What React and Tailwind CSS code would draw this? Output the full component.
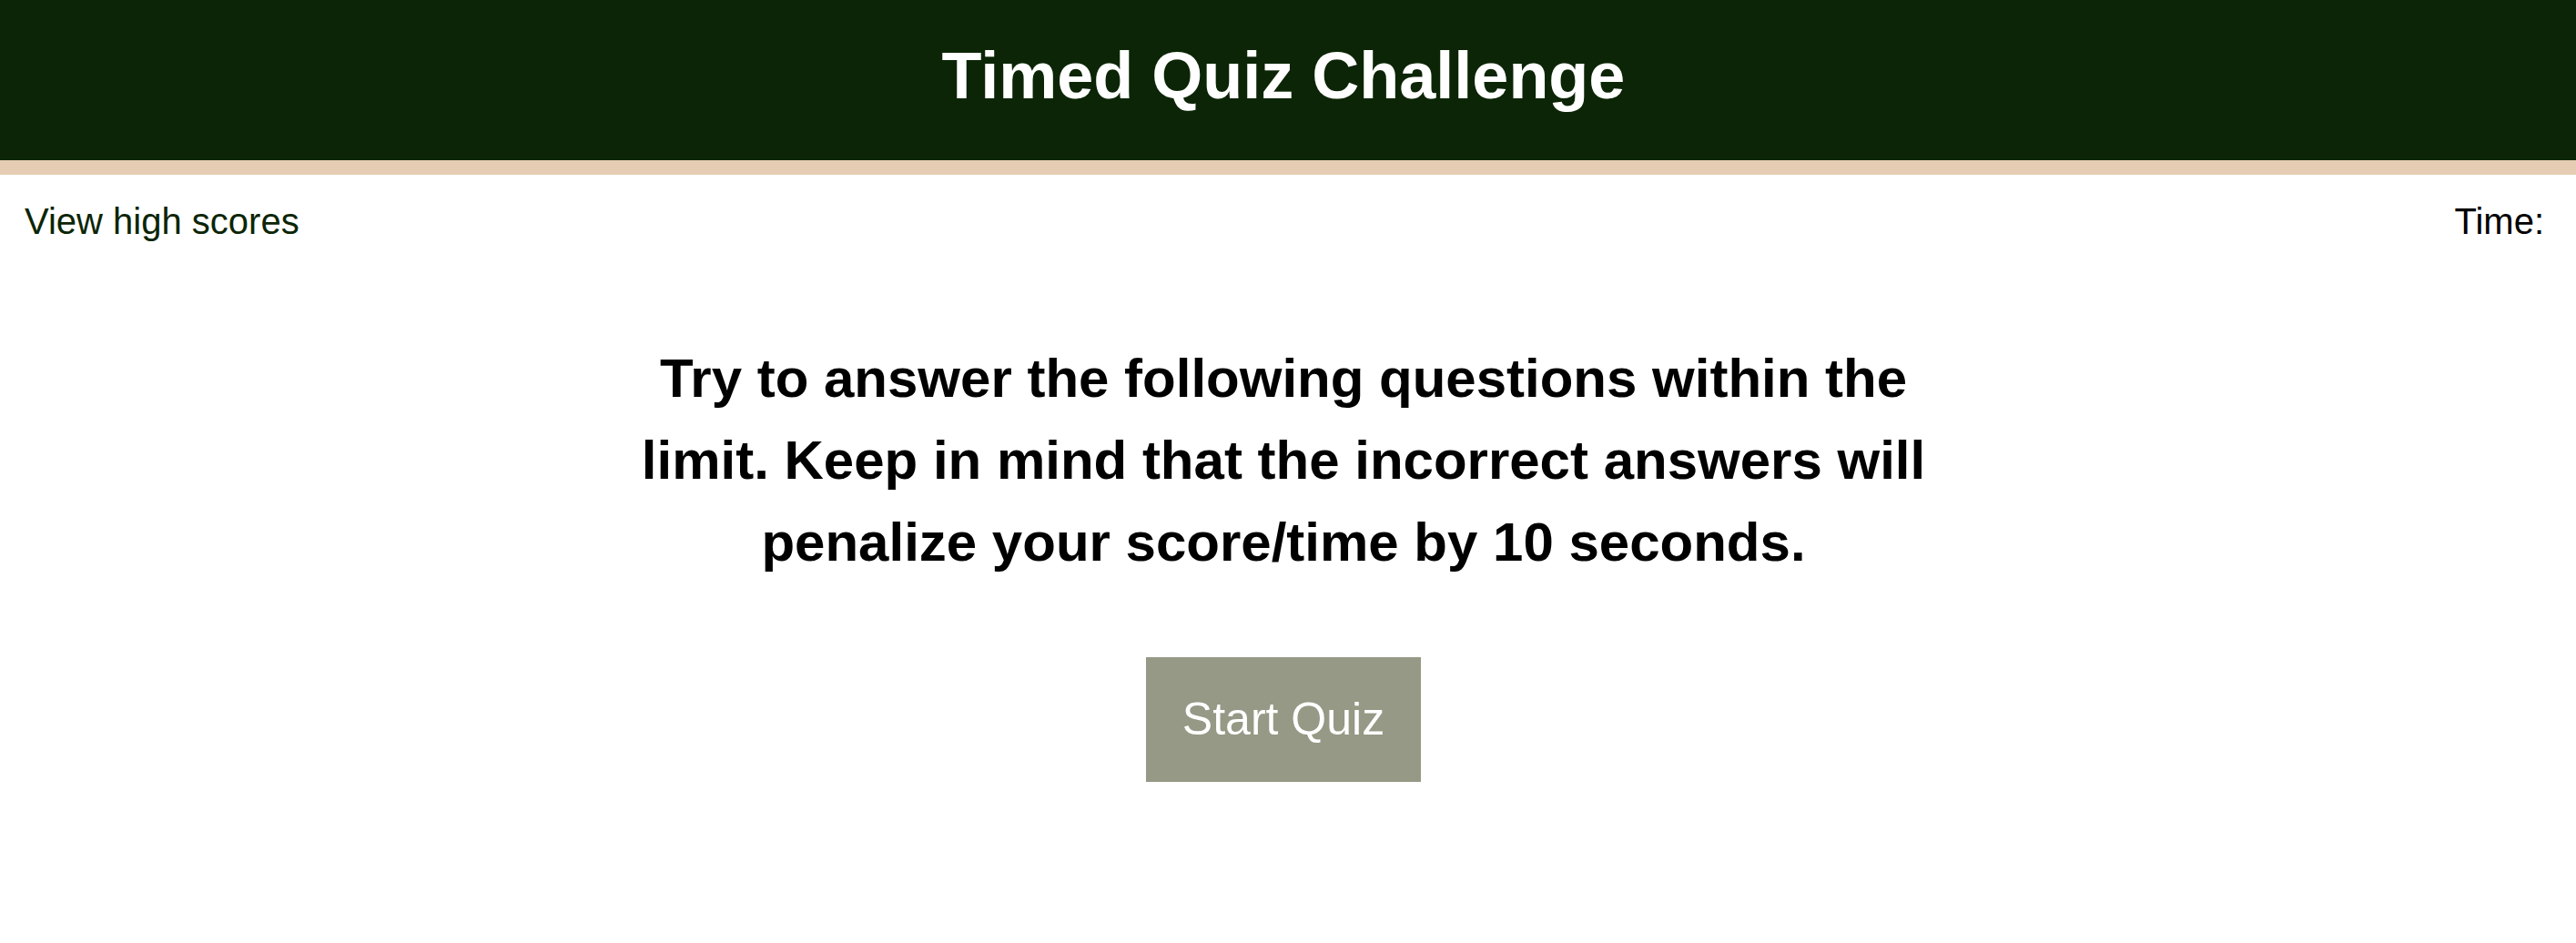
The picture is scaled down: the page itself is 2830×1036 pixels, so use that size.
import React from 'react';

const App = () => {
    return (
        <div className="min-h-screen bg-white font-['Liberation_Sans',Arial,sans-serif]">
            {/* Header */}
            <header className="bg-[#0c2506] border-b-[16px] border-[#e6ccb2]">
                <h1 className="pr-[10px] pt-[42px] pb-[51px] text-center text-[72px] leading-[83px] font-bold text-white">
                    Timed Quiz Challenge
                </h1>
            </header>

            <main className="pr-[10px]">
                {/* Top row */}
                <div className="flex items-start justify-between pl-[27px] pr-[25px] pt-[28px]">
                    <a href="#" className="text-[40px] leading-[46px] text-[#0c2506]">
                        View high scores
                    </a>
                    <div className="text-[40px] leading-[46px] text-black">
                        Time: <span></span>
                    </div>
                </div>

                {/* Intro */}
                <div className="flex flex-col items-center">
                    <p className="w-[1415px] mt-[105px] text-center text-[60px] leading-[90px] font-bold text-black">
                        Try to answer the following questions within the limit. Keep in mind that the incorrect answers will penalize your score/time by 10 seconds.
                    </p>
                    <button className="mt-[81px] w-[302px] h-[137px] flex items-center justify-center bg-[#959985] text-white text-[50px] leading-[57px]">
                        Start Quiz
                    </button>
                </div>
            </main>
        </div>
    );
};

export default App;
